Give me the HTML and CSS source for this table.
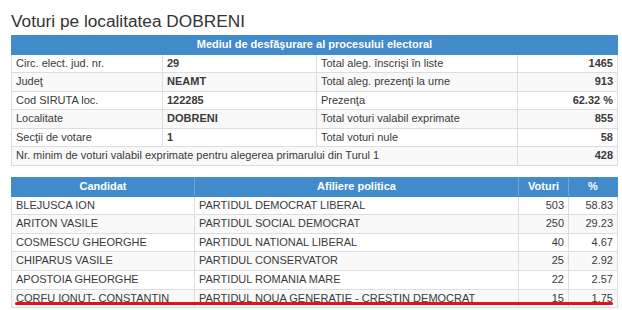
FILE: index.html
```html
<!DOCTYPE html>
<html lang="ro">
<head>
<meta charset="utf-8">
<title>Voturi pe localitatea DOBRENI</title>
<link rel="stylesheet" href="styles.css">
</head>
<body>
<div class="page">
  <h1 class="title">Voturi pe localitatea DOBRENI</h1>
  <table class="grid info">
    <colgroup><col class="c1"><col class="c2"><col class="c3"><col class="c4"></colgroup>
    <thead>
      <tr><th colspan="4">Mediul de desfăşurare al procesului electoral</th></tr>
    </thead>
    <tbody>
      <tr><td>Circ. elect. jud. nr.</td><td class="b">29</td><td>Total aleg. înscrişi în liste</td><td class="num b">1465</td></tr>
      <tr><td>Judeţ</td><td class="b">NEAMT</td><td>Total aleg. prezenţi la urne</td><td class="num b">913</td></tr>
      <tr><td>Cod SIRUTA loc.</td><td class="b">122285</td><td>Prezenţa</td><td class="num b">62.32 %</td></tr>
      <tr><td>Localitate</td><td class="b">DOBRENI</td><td>Total voturi valabil exprimate</td><td class="num b">855</td></tr>
      <tr><td>Secţii de votare</td><td class="b">1</td><td>Total voturi nule</td><td class="num b">58</td></tr>
      <tr><td colspan="3">Nr. minim de voturi valabil exprimate pentru alegerea primarului din Turul 1</td><td class="num b">428</td></tr>
    </tbody>
  </table>
  <div class="results-wrap">
    <table class="grid results">
      <colgroup><col class="r1"><col class="r2"><col class="r3"><col class="r4"></colgroup>
      <thead>
        <tr><th>Candidat</th><th>Afiliere politica</th><th>Voturi</th><th>%</th></tr>
      </thead>
      <tbody>
        <tr><td>BLEJUSCA ION</td><td>PARTIDUL DEMOCRAT LIBERAL</td><td class="num">503</td><td class="num">58.83</td></tr>
        <tr><td>ARITON VASILE</td><td>PARTIDUL SOCIAL DEMOCRAT</td><td class="num">250</td><td class="num">29.23</td></tr>
        <tr><td>COSMESCU GHEORGHE</td><td>PARTIDUL NATIONAL LIBERAL</td><td class="num">40</td><td class="num">4.67</td></tr>
        <tr><td>CHIPARUS VASILE</td><td>PARTIDUL CONSERVATOR</td><td class="num">25</td><td class="num">2.92</td></tr>
        <tr><td>APOSTOIA GHEORGHE</td><td>PARTIDUL ROMANIA MARE</td><td class="num">22</td><td class="num">2.57</td></tr>
        <tr><td>CORFU IONUT- CONSTANTIN</td><td>PARTIDUL NOUA GENERATIE - CRESTIN DEMOCRAT</td><td class="num">15</td><td class="num">1.75</td></tr>
      </tbody>
    </table>
    <div class="underline"></div>
  </div>
</div>
</body>
</html>
```

FILE: styles.css
```css
html, body {
  margin: 0;
  padding: 0;
  background: #fff;
}
body {
  font-family: "Liberation Sans", Arial, sans-serif;
  color: #333;
}
.page {
  width: 606px;
  margin-left: 11px;
  padding-top: 11px;
}
.title {
  margin: 0 0 4px 0;
  font-size: 17.25px;
  font-weight: normal;
  line-height: 20px;
  color: #333;
}
.grid {
  width: 606px;
  border-collapse: collapse;
  table-layout: fixed;
  font-size: 11px;
}
.grid th {
  background: #428bca;
  color: #fff;
  font-weight: bold;
  text-align: center;
  line-height: 15.5px;
  height: 17.5px;
  box-sizing: border-box;
  padding: 1px 4px;
  border: 1px solid #428bca;
  border-right-color: #6fa6d8;
}
.grid th:last-child { border-right-color: #428bca; }
.grid td {
  line-height: 15.6px;
  padding: 1px 4px;
  border: 1px solid #ddd;
  white-space: nowrap;
  overflow: hidden;
  color: #3a3a3a;
}
.grid tbody tr:nth-child(even) td { background: #f9f9f9; }
.grid .b { font-weight: bold; }
.grid .num { text-align: right; }
.info .c1 { width: 151px; }
.info .c2 { width: 154px; }
.info .c3 { width: 201px; }
.info .c4 { width: 100px; }
.results-wrap {
  position: relative;
  margin-top: 11px;
}
.results .r1 { width: 183px; }
.results .r2 { width: 324px; }
.results .r3 { width: 50px; }
.results .r4 { width: 49px; }
.underline {
  position: absolute;
  left: 4px;
  width: 598px;
  top: 125px;
  height: 3px;
  background: #e0141b;
  border-radius: 2px;
}
```
